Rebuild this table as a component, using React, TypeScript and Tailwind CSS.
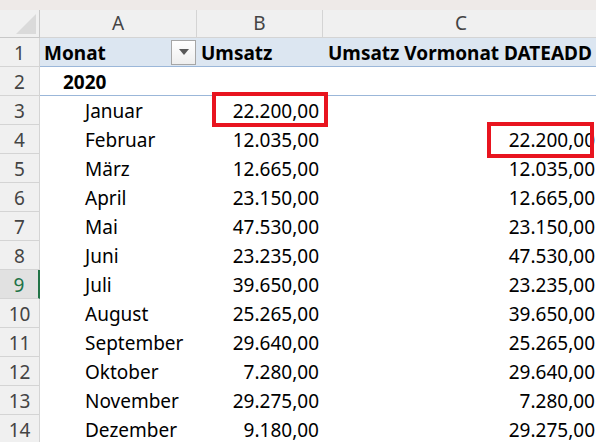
import React from "react";

const rows: [string, string, string][] = [
  ["Januar", "22.200,00", ""],
  ["Februar", "12.035,00", "22.200,00"],
  ["März", "12.665,00", "12.035,00"],
  ["April", "23.150,00", "12.665,00"],
  ["Mai", "47.530,00", "23.150,00"],
  ["Juni", "23.235,00", "47.530,00"],
  ["Juli", "39.650,00", "23.235,00"],
  ["August", "25.265,00", "39.650,00"],
  ["September", "29.640,00", "25.265,00"],
  ["Oktober", "7.280,00", "29.640,00"],
  ["November", "29.275,00", "7.280,00"],
  ["Dezember", "9.180,00", "29.275,00"],
];

function RowHead({ n, active }: { n: number; active?: boolean }) {
  return (
    <div
      className={
        active
          ? "flex h-[29px] items-center justify-center border-b border-r-2 border-b-[#d4d4d4] border-r-[#217346] bg-[#e1e1e1] pt-[2px] text-[#217346]"
          : "flex h-[29px] items-center justify-center border-b border-r border-[#d4d4d4] bg-[#f0f0f0] pt-[2px] text-[#444]"
      }
    >
      {n}
    </div>
  );
}

export default function App() {
  return (
    <div
      className="h-[442px] w-[596px] overflow-hidden bg-white text-[19px] leading-none text-black"
      style={{ fontFamily: "'Noto Sans', Lato, sans-serif" }}
    >
      <div className="h-[10px] bg-[#eeeae8]" />
      <div className="grid w-[599px] grid-cols-[40px_157px_126px_276px]">
        {/* column header */}
        <div className="relative h-[28px] border-b border-r border-[#c8c8c8] bg-[#f0f0f0]">
          <div className="absolute bottom-[3px] right-[3px] h-0 w-0 border-b-[20px] border-l-[20px] border-b-[#dadada] border-l-transparent" />
        </div>
        <div className="flex h-[28px] items-center justify-center border-b border-r border-[#d4d4d4] bg-[#f0f0f0] text-[#444]">A</div>
        <div className="flex h-[28px] items-center justify-center border-b border-r border-[#d4d4d4] bg-[#f0f0f0] text-[#444]">B</div>
        <div className="flex h-[28px] items-center justify-center border-b border-[#d4d4d4] bg-[#f0f0f0] text-[#444]">C</div>

        {/* row 1 */}
        <RowHead n={1} />
        <div className="flex h-[29px] items-center justify-between border-b border-[#9bb7d9] bg-[#dce6f1] pl-[4px] pr-[1px] pt-[2px] font-bold">
          <span>Monat</span>
          <div className="mb-[2px] flex h-[25px] w-[25px] items-center justify-center border border-[#a6a6a6] bg-gradient-to-b from-white to-[#eeeeee]">
            <svg width="10" height="6" viewBox="0 0 10 6">
              <path d="M0 0 L10 0 L5 6 Z" fill="#595959" />
            </svg>
          </div>
        </div>
        <div className="flex h-[29px] items-center border-b border-[#9bb7d9] bg-[#dce6f1] pl-[4px] pt-[2px] font-bold">Umsatz</div>
        <div className="flex h-[29px] items-center whitespace-nowrap border-b border-[#9bb7d9] bg-[#dce6f1] pl-[5px] pt-[2px] font-bold">Umsatz Vormonat DATEADD</div>

        {/* row 2 */}
        <RowHead n={2} />
        <div className="flex h-[29px] items-center border-b border-[#9bb7d9] pl-[23px] pt-[2px] font-bold">2020</div>
        <div className="h-[29px] border-b border-[#9bb7d9]" />
        <div className="h-[29px] border-b border-[#9bb7d9]" />

        {rows.map(([m, b, c], i) => (
          <React.Fragment key={m}>
            <RowHead n={i + 3} active={i + 3 === 9} />
            <div className="flex h-[29px] items-center pl-[45px] pt-[2px]">{m}</div>
            <div className="relative flex h-[29px] items-center justify-end pr-[4px] pt-[2px]">
              {b}
              {i === 0 && (
                <div className="pointer-events-none absolute left-[15px] top-[-4px] z-10 h-[35px] w-[116px] border-[4px] border-[#e8141f]" />
              )}
            </div>
            <div className="relative flex h-[29px] items-center justify-end pr-[4px] pt-[2px]">
              {c}
              {i === 1 && (
                <div className="pointer-events-none absolute left-[164px] top-[-3px] z-10 h-[36px] w-[107px] border-[4px] border-[#e8141f]" />
              )}
            </div>
          </React.Fragment>
        ))}
      </div>
    </div>
  );
}
